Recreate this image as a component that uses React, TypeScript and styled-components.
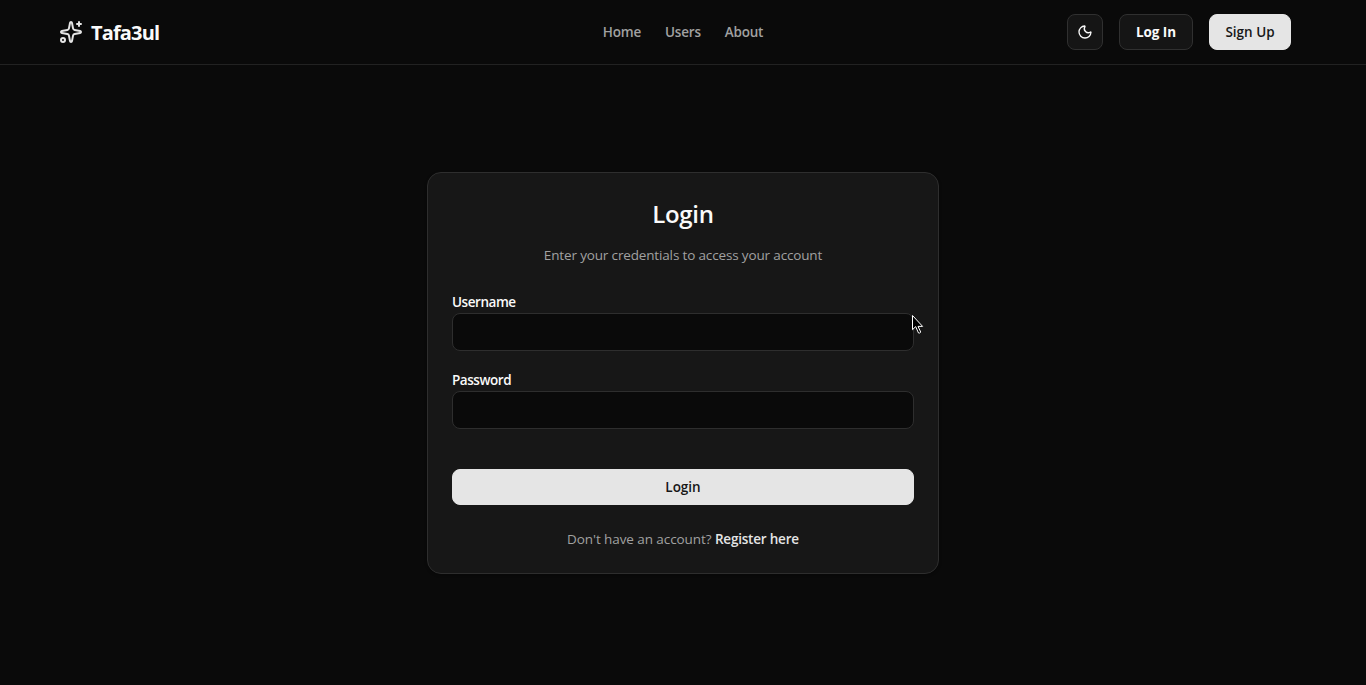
import styled, { createGlobalStyle } from 'styled-components';
import { Moon, Sparkles } from 'lucide-react';

const GlobalStyle = createGlobalStyle`
  *,
  *::before,
  *::after {
    box-sizing: border-box;
  }

  body {
    margin: 0;
    background: #0a0a0a;
    color: #fafafa;
    font-family: 'Segoe UI', 'Open Sans', 'Noto Sans', sans-serif;
    font-size: 13.5px;
    line-height: 20px;
  }
`;

const Page = styled.div`
  display: flex;
  flex-direction: column;
  height: 100vh;
  min-height: 685px;
`;

const Header = styled.header`
  display: grid;
  grid-template-columns: 1fr auto 1fr;
  align-items: center;
  height: 65px;
  padding: 0 59px;
  border-bottom: 1px solid #222;
`;

const Brand = styled.a`
  display: flex;
  align-items: center;
  gap: 8px;
  color: #fafafa;
  font-size: 20px;
  font-weight: 700;
  line-height: 28px;
  letter-spacing: -0.85px;
  text-decoration: none;
`;

const BrandName = styled.span`
  padding-top: 2px;
`;

const Nav = styled.nav`
  display: flex;
  gap: 24px;
`;

const NavLink = styled.a`
  color: #a1a1a1;
  font-weight: 600;
  letter-spacing: -0.2px;
  text-decoration: none;
`;

const Actions = styled.div`
  display: flex;
  justify-content: flex-end;
  gap: 16px;
  padding-right: 16px;
`;

const Button = styled.button<{ $primary?: boolean; $width?: string }>`
  display: inline-flex;
  align-items: center;
  justify-content: center;
  width: ${(p) => p.$width ?? '100%'};
  height: 36px;
  padding: 0;
  border: 1px solid ${(p) => (p.$primary ? '#e5e5e5' : '#303030')};
  border-radius: 8px;
  background: ${(p) => (p.$primary ? '#e5e5e5' : '#151515')};
  color: ${(p) => (p.$primary ? '#171717' : '#fafafa')};
  font: inherit;
  font-weight: ${(p) => (p.$primary ? 600 : 700)};
  letter-spacing: ${(p) => (p.$primary ? '0' : '-0.1px')};
  cursor: pointer;
`;

const Main = styled.main`
  display: flex;
  flex: 1;
  align-items: center;
  justify-content: center;
  padding-bottom: 4px;
`;

const Card = styled.form`
  display: flex;
  flex-direction: column;
  width: 512px;
  padding: 24px;
  border: 1px solid #2e2e2e;
  border-radius: 14px;
  background: #171717;
  box-shadow: 0 1px 3px rgba(0, 0, 0, 0.3);
`;

const Title = styled.h1`
  margin: 0 0 14px;
  font-size: 24px;
  font-weight: 600;
  line-height: 34px;
  letter-spacing: -0.3px;
  text-align: center;
`;

const Muted = styled.p`
  margin: 0;
  color: #a1a1a1;
  letter-spacing: -0.15px;
  text-align: center;
`;

const Fields = styled.div`
  display: flex;
  flex-direction: column;
  gap: 22px;
  margin: 30px 0 40px;
`;

const Field = styled.label`
  display: flex;
  flex-direction: column;
  gap: 4px;
  font-weight: 600;
  line-height: 14px;
  letter-spacing: -0.45px;
`;

const Input = styled.input`
  width: 100%;
  height: 38px;
  padding: 0 12px;
  border: 1px solid #2e2e2e;
  border-radius: 8px;
  outline: none;
  background: #0a0a0a;
  color: #fafafa;
  font: inherit;
`;

const Footer = styled(Muted)`
  margin-top: 24px;
  letter-spacing: -0.08px;
`;

const RegisterLink = styled.a`
  color: #e5e5e5;
  font-weight: 600;
  letter-spacing: -0.2px;
  text-decoration: none;
`;

const Pointer = styled.svg`
  position: absolute;
  top: 315px;
  left: 912px;
  pointer-events: none;
`;

const LINKS = ['Home', 'Users', 'About'];

export default function App() {
  return (
    <Page>
      <GlobalStyle />
      <Header>
        <Brand href="#">
          <Sparkles size={24} color="#e5e5e5" />
          <BrandName>Tafa3ul</BrandName>
        </Brand>
        <Nav>
          {LINKS.map((link) => (
            <NavLink key={link} href="#">
              {link}
            </NavLink>
          ))}
        </Nav>
        <Actions>
          <Button $width="36px" aria-label="Toggle theme">
            <Moon size={16} />
          </Button>
          <Button $width="74px">Log In</Button>
          <Button $width="82px" $primary>
            Sign Up
          </Button>
        </Actions>
      </Header>
      <Main>
        <Card onSubmit={(e) => e.preventDefault()}>
          <Title>Login</Title>
          <Muted>Enter your credentials to access your account</Muted>
          <Fields>
            <Field>
              Username
              <Input name="username" />
            </Field>
            <Field>
              Password
              <Input name="password" type="password" />
            </Field>
          </Fields>
          <Button $primary>Login</Button>
          <Footer>
            Don't have an account? <RegisterLink href="#">Register here</RegisterLink>
          </Footer>
        </Card>
      </Main>
      <Pointer width="12" height="20" viewBox="0 0 12 20" aria-hidden>
        <path
          d="M.5.5v14.2l3.2-3.1 2.8 6.4c.8.4 2-.1 2.2-1l-2.7-5.6h4.6z"
          fill="#000"
          stroke="#fff"
        />
      </Pointer>
    </Page>
  );
}
